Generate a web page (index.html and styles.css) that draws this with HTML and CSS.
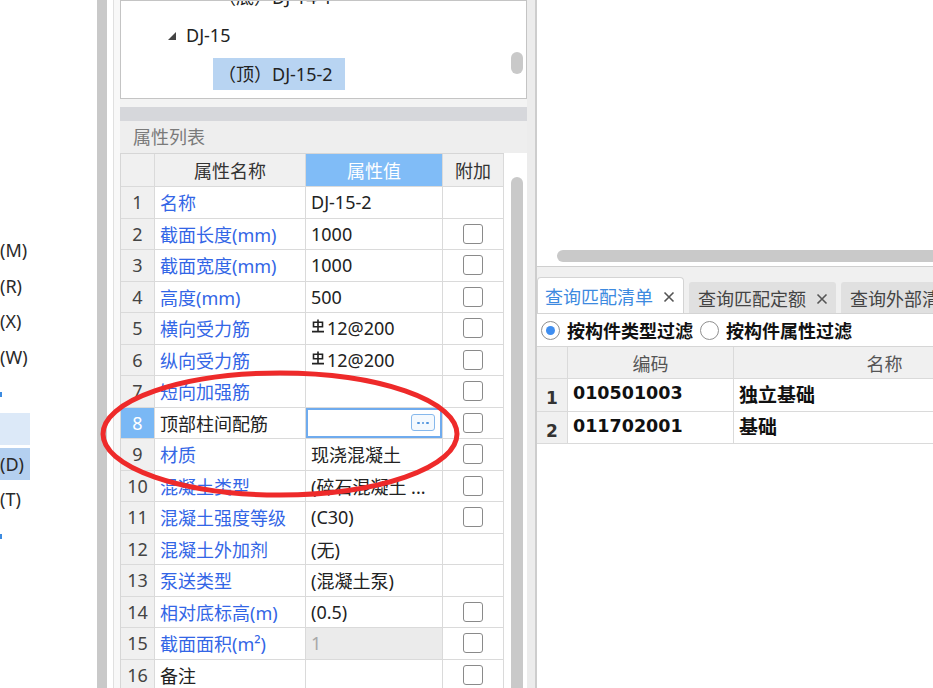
FILE: index.html
```html
<!DOCTYPE html>
<html lang="zh-CN">
<head>
<meta charset="utf-8">
<title>属性列表</title>
<link rel="stylesheet" href="styles.css">
</head>
<body>
<div class="app">
  <div class="side">
    <ul class="side-list">
      <li>(M)</li>
      <li>(R)</li>
      <li>(X)</li>
      <li>(W)</li>
      <li class="dotrow"><span class="dot"></span></li>
      <li class="hl hl1"></li>
      <li class="hl hl2">(D)</li>
      <li>(T)</li>
      <li class="dotrow"><span class="dot"></span></li>
    </ul>
  </div>
  <div class="splitter"></div>
  <div class="gutter"></div>
  <div class="left">
    <div class="tree">
      <ul class="tree-list">
        <li class="ti leaf">（底）DJ-14-1</li>
        <li class="ti parent"><svg class="tri" width="8" height="8" viewBox="0 0 8 8"><polygon points="8,0 8,8 0,8"/></svg><span>DJ-15</span></li>
        <li class="ti sel"><span class="sel-box">（顶）DJ-15-2</span></li>
      </ul>
      <div class="tree-scroll"><div class="tthumb"></div></div>
    </div>
    <div class="gap1"></div>
    <div class="band"></div>
    <div class="ptitle">属性列表</div>
    <div class="props">
      <div class="ptable">
        <div class="c h"></div>
        <div class="c h">属性名称</div>
        <div class="c h hv">属性值</div>
        <div class="c h">附加</div>

        <div class="c n">1</div><div class="c k">名称</div><div class="c v">DJ-15-2</div><div class="c a"></div>
        <div class="c n">2</div><div class="c k">截面长度(mm)</div><div class="c v">1000</div><div class="c a"><span class="cb"></span></div>
        <div class="c n">3</div><div class="c k">截面宽度(mm)</div><div class="c v">1000</div><div class="c a"><span class="cb"></span></div>
        <div class="c n">4</div><div class="c k">高度(mm)</div><div class="c v">500</div><div class="c a"><span class="cb"></span></div>
        <div class="c n">5</div><div class="c k">横向受力筋</div><div class="c v"><svg class="rebar" width="14" height="14" viewBox="0 0 14 14"><path d="M2.5 3.2h9v4.6h-9z M7 0.5v12 M1 12.6h12"/></svg>12@200</div><div class="c a"><span class="cb"></span></div>
        <div class="c n">6</div><div class="c k">纵向受力筋</div><div class="c v"><svg class="rebar" width="14" height="14" viewBox="0 0 14 14"><path d="M2.5 3.2h9v4.6h-9z M7 0.5v12 M1 12.6h12"/></svg>12@200</div><div class="c a"><span class="cb"></span></div>
        <div class="c n">7</div><div class="c k">短向加强筋</div><div class="c v"></div><div class="c a"><span class="cb"></span></div>
        <div class="c n nsel">8</div><div class="c kb">顶部柱间配筋</div><div class="c v edit"><span class="more"><i></i><i></i><i></i></span></div><div class="c a"><span class="cb"></span></div>
        <div class="c n">9</div><div class="c k">材质</div><div class="c v">现浇混凝土</div><div class="c a"><span class="cb"></span></div>
        <div class="c n">10</div><div class="c k">混凝土类型</div><div class="c v">(碎石混凝土 ...</div><div class="c a"><span class="cb"></span></div>
        <div class="c n">11</div><div class="c k">混凝土强度等级</div><div class="c v">(C30)</div><div class="c a"><span class="cb"></span></div>
        <div class="c n">12</div><div class="c k">混凝土外加剂</div><div class="c v">(无)</div><div class="c a"></div>
        <div class="c n">13</div><div class="c k">泵送类型</div><div class="c v">(混凝土泵)</div><div class="c a"></div>
        <div class="c n">14</div><div class="c k">相对底标高(m)</div><div class="c v">(0.5)</div><div class="c a"><span class="cb"></span></div>
        <div class="c n">15</div><div class="c k">截面面积(m²)</div><div class="c v ro">1</div><div class="c a"><span class="cb"></span></div>
        <div class="c n">16</div><div class="c kb">备注</div><div class="c v"></div><div class="c a"><span class="cb"></span></div>
      </div>
      <div class="vs"><div class="vthumb"></div></div>
    </div>
  </div>
  <div class="sep"></div>
  <div class="right">
    <div class="canvas"><div class="hthumb"></div></div>
    <div class="tabs">
      <div class="tab active"><span>查询匹配清单</span><svg class="x" width="12" height="12" viewBox="0 0 12 12"><path d="M1.5 1.5l9 9M10.5 1.5l-9 9"/></svg></div>
      <div class="tab"><span>查询匹配定额</span><svg class="x" width="12" height="12" viewBox="0 0 12 12"><path d="M1.5 1.5l9 9M10.5 1.5l-9 9"/></svg></div>
      <div class="tab"><span>查询外部清单</span></div>
    </div>
    <div class="content">
      <div class="radios">
        <span class="radio on"></span><span class="rlabel">按构件类型过滤</span>
        <span class="radio"></span><span class="rlabel">按构件属性过滤</span>
      </div>
      <div class="rtable">
        <div class="r rh"></div><div class="r rh ctr">编码</div><div class="r rh ctr">名称</div>
        <div class="r rn">1</div><div class="r code">010501003</div><div class="r name">独立基础</div>
        <div class="r rn">2</div><div class="r code">011702001</div><div class="r name">基础</div>
      </div>
    </div>
  </div>
</div>
<svg class="annot" width="933" height="688" viewBox="0 0 933 688">
  <ellipse cx="280" cy="434" rx="177" ry="61" />
</svg>
</body>
</html>
```
FILE: styles.css
```css
* { box-sizing: border-box; margin: 0; padding: 0; }
html, body { width: 933px; height: 688px; overflow: hidden; background: #fff; }
body {
  font-family: "Noto Sans", "Noto Sans CJK SC", sans-serif;
  font-size: 18px;
  color: #222;
  position: relative;
}
.app { display: flex; height: 688px; }

/* far-left strip */
.side { width: 97px; flex: none; overflow: hidden; background: #fff; }
.side-list { list-style: none; padding-top: 233px; }
.side-list li {
  height: 35.5px; line-height: 35.5px;
  white-space: nowrap; color: #2a2a2a;
}
.side-list li.hl { width: 30px; padding: 2px 0 1.5px; line-height: 32px; background-clip: content-box; }
.side-list li.hl1 { background-color: #dce9f8; }
.side-list li.hl2 { background-color: #b4d0f0; }
.dot { display: inline-block; width: 2px; height: 5px; background: #3d8be0; vertical-align: middle; }

.splitter { width: 10px; flex: none; background: #c9c9c9; }
.gutter {
  width: 13px; flex: none;
  background: linear-gradient(to right, #fff 6px, #e0e0e0 6px, #e0e0e0 7px, #f8f8f8 7px);
}

/* left panel */
.left { width: 407px; flex: none; display: flex; flex-direction: column; }
.tree { height: 99px; flex: none; border: 1px solid #c4c4c4; display: flex; overflow: hidden; background: #fff; }
.tree-list { list-style: none; width: 390px; flex: none; }
.ti { height: 38px; line-height: 38px; white-space: nowrap; color: #222; }
.ti.leaf { margin-top: -23px; padding-left: 97px; }
.ti.parent { display: flex; align-items: center; padding-left: 47px; }
.tri { fill: #444; margin-right: 10px; margin-top: 1px; }
.ti.sel { height: 32px; line-height: 32px; margin-top: 4px; padding-left: 92px; }
.sel-box { display: inline-block; width: 132px; padding-left: 5px; background: #b8d4f2; }
.tree-scroll { flex: 1; }
.tthumb { width: 12px; height: 22px; margin-top: 51px; border-radius: 6px; background: #c9c9c9; }

.gap1 { height: 8px; flex: none; background: #f3f3f3; }
.band { height: 14px; flex: none; background: #d6d7db; }
.ptitle { height: 32px; flex: none; line-height: 32px; background: #eeeeee; color: #7a7a7a; padding-left: 13px; }

.props { flex: 1; display: flex; overflow: hidden; background: #fff; }
.ptable {
  display: grid;
  grid-template-columns: 34px 151px 137px 61px;
  grid-template-rows: 33px;
  grid-auto-rows: 31.5px;
  align-content: start;
  border-left: 1px solid #d6d6d6;
  border-top: 1px solid #d6d6d6;
  flex: none;
}
.c {
  border-right: 1px solid #dadada;
  border-bottom: 1px solid #dadada;
  display: flex; align-items: center;
  padding-left: 5px;
  white-space: nowrap; overflow: hidden;
}
.h { background: #f0f0f0; justify-content: center; padding: 0; color: #333; }
.hv { background: #80bcf7; color: #fff; }
.n { background: #f0f0f0; justify-content: center; padding: 0; color: #444; }
.nsel { background: #7ab8f5; color: #fff; }
.k { color: #3366e6; }
.kb { color: #222; }
.v { color: #222; }
.ro { background: #ebebeb; color: #a8a8a8; }
.a { justify-content: center; padding: 0; }
.cb { width: 20px; height: 20px; border: 1.5px solid #8a8a8a; border-radius: 3px; background: #fff; }
.rebar { fill: none; stroke: #222; stroke-width: 1.6; margin-right: 2px; margin-top: -4px; flex: none; }
.edit { box-shadow: inset 0 0 0 2px #6fabee; }
.more {
  margin-left: auto; margin-right: 7px;
  width: 24px; height: 17px;
  border: 1.5px solid #86b8ec; border-radius: 3px; background: #f4f9fe;
  display: flex; align-items: center; justify-content: center; gap: 2px;
}
.more i { display: block; width: 2.5px; height: 2.5px; background: #4f93de; border-radius: 1px; }

.vs { flex: 1; padding-left: 7px; }
.vthumb { width: 12px; height: 600px; margin-top: 24px; border-radius: 6px 6px 0 0; background: #c9c9c9; }

.sep { width: 10px; flex: none; background: #ececec; border-right: 2px solid #cdcdcd; }

/* right panel */
.right { flex: 1; display: flex; flex-direction: column; overflow: hidden; }
.canvas { height: 267px; flex: none; border-bottom: 1px solid #cfcfcf; padding: 250px 0 0 20px; background: #fff; }
.hthumb { width: 420px; height: 12px; border-radius: 6px; background: #c9c9c9; }
.tabs { height: 46px; flex: none; background: #f0f0f0; display: flex; align-items: flex-end; gap: 5px; }
.tab {
  height: 31px; width: 147px; flex: none;
  background: #e0e0e0; border-radius: 3px 3px 0 0;
  padding-left: 9px; display: flex; align-items: center;
  white-space: nowrap; color: #444;
}
.tab.active {
  height: 36px; background: #fff; color: #3d8ae0;
  border: 1px solid #d4d4d4; border-bottom: none; border-radius: 4px 4px 0 0;
  padding-left: 7px;
}
.x { fill: none; stroke: #555; stroke-width: 1.6; margin-left: 10px; margin-top: 2px; }
.content { flex: 1; border-top: 1px solid #d4d4d4; background: #fff; }
.radios { height: 32px; display: flex; align-items: center; padding-left: 4px; }
.radio {
  width: 19px; height: 19px; flex: none; border: 1px solid #8f8f8f; border-radius: 50%;
  background: #fff; display: flex; align-items: center; justify-content: center;
  margin-right: 7px;
}
.radio.on::after { content: ""; width: 9px; height: 9px; border-radius: 50%; background: #3f8ef0; }
.rlabel { font-weight: 700; color: #111; margin-right: 7px; white-space: nowrap; }

.rtable {
  display: grid;
  grid-template-columns: 31px 166px 302px;
  grid-template-rows: 32px 32.5px 32.5px;
  border-top: 1px solid #d6d6d6;
  width: 499px;
}
.r { border-right: 1px solid #dadada; border-bottom: 1px solid #dadada; display: flex; align-items: center; white-space: nowrap; overflow: hidden; }
.rh { background: #f0f0f0; color: #555; }
.ctr { justify-content: center; }
.rn { background: #f0f0f0; justify-content: center; font-family: "DejaVu Sans", sans-serif; font-weight: 700; font-size: 17px; color: #333; padding-top: 7px; }
.code { font-family: "DejaVu Sans", sans-serif; font-weight: 700; font-size: 17.5px; color: #111; padding-left: 5px; padding-bottom: 3px; }
.name { font-family: "Noto Sans CJK SC", sans-serif; font-weight: 700; font-size: 19px; color: #111; padding-left: 5px; padding-bottom: 3px; }

/* red annotation */
.annot { position: absolute; left: 0; top: 0; pointer-events: none; }
.annot ellipse { fill: none; stroke: #ee2a2a; stroke-width: 5; }
```
